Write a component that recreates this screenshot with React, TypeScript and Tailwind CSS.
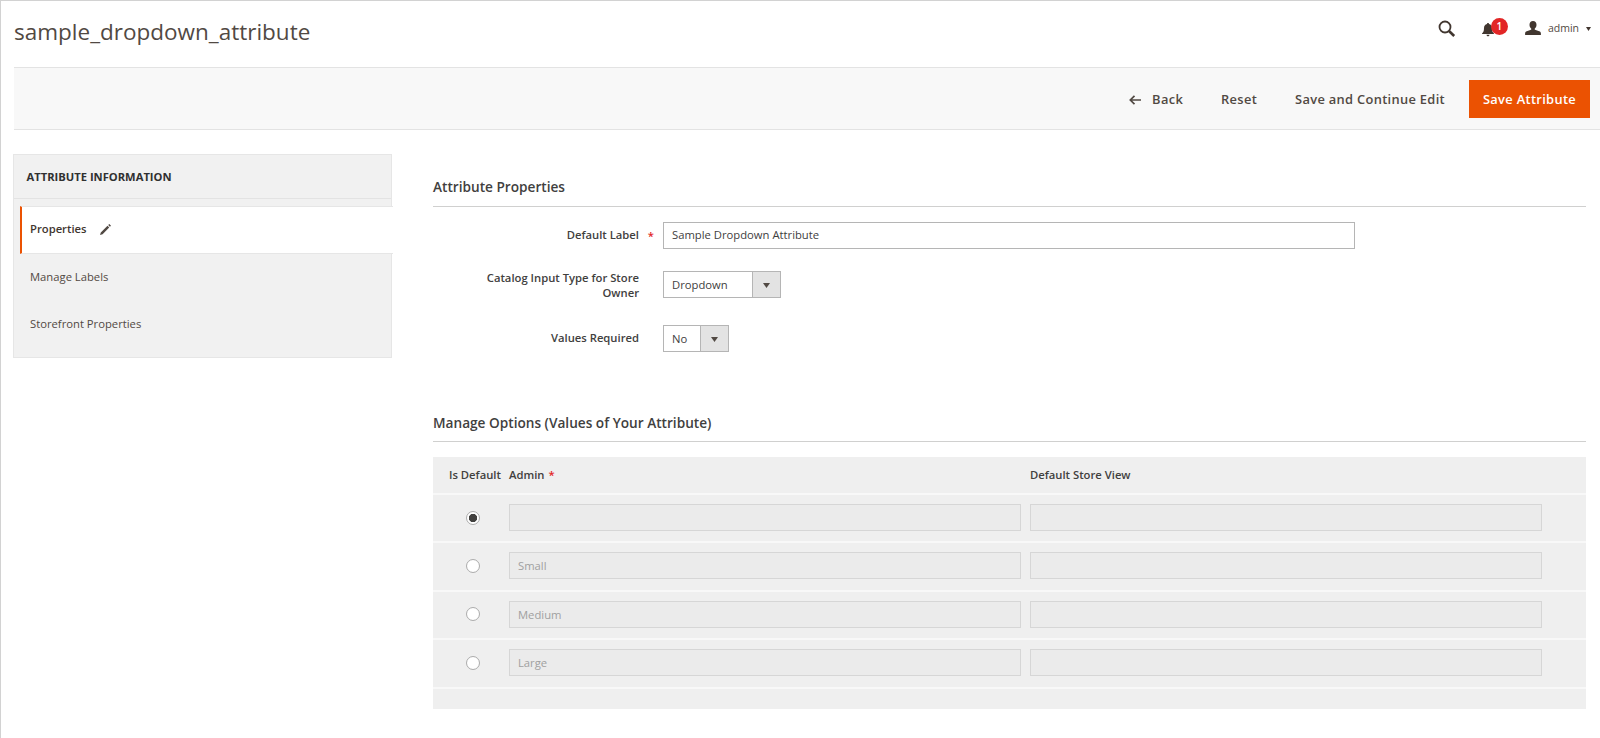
import { useState } from 'react';

const tabs = ['Properties', 'Manage Labels', 'Storefront Properties'];

const options = [
  { id: 1, admin: '', storeView: '' },
  { id: 2, admin: 'Small', storeView: '' },
  { id: 3, admin: 'Medium', storeView: '' },
  { id: 4, admin: 'Large', storeView: '' },
];

function SelectBox({ value, className }: { value: string; className: string }) {
  return (
    <button
      type="button"
      className={`flex h-[27px] border border-[#b5b5b5] bg-white text-left ${className}`}
    >
      <span className="flex-1 pl-2 leading-[25px]">{value}</span>
      <span className="flex h-full w-[28px] items-center justify-center border-l border-[#b5b5b5] bg-[#e3e3e3]">
        <svg width="7" height="5" viewBox="0 0 7 5" className="mt-[2px]">
          <path d="M0 0h7L3.5 5z" fill="#514943" />
        </svg>
      </span>
    </button>
  );
}

function Header() {
  return (
    <header className="flex h-[66px] justify-between pl-[13px]">
      <h1 className="pt-[14px] text-[22.5px] leading-[34px] text-[#514943]">
        sample_dropdown_attribute
      </h1>
      <div className="flex h-[54px] items-center pr-[9px] text-[#41362f]">
        <svg width="18" height="18" viewBox="0 0 18 18" className="mt-[1px]">
          <circle cx="7" cy="7" r="5.5" fill="none" stroke="currentColor" strokeWidth="1.8" />
          <path d="M11 11l5.2 5" stroke="currentColor" strokeWidth="2.6" />
        </svg>
        <div className="relative ml-[26px] h-[20px] w-[26px]">
          <svg width="12" height="14" viewBox="0 0 12 14" className="absolute top-[5px] left-0">
            <path
              d="M6 0c.7 0 1 .4 1 1 2 .5 3 2 3 4 0 3 .6 4.2 2 5.500V11H0v-.5C1.400 9.200 2 8 2 5c0-2 1-3.500 3-4 0-.6.3-1 1-1zM4.500 11.700h3c0 .9-.6 1.500-1.500 1.500s-1.500-.6-1.500-1.500z"
              fill="currentColor"
            />
          </svg>
          <span className="absolute top-0 left-[9px] flex h-[17px] w-[17px] items-center justify-center rounded-full bg-[#e22626] text-[10px] font-semibold text-white">
            1
          </span>
        </div>
        <svg width="16" height="14" viewBox="0 0 16 14" className="ml-[17px]">
          <path
            d="M8 0c2.200 0 3.500 1.500 3.500 3.700 0 1.600-.7 3-1.600 3.800-.3.300-.3 1 .1 1.200l4.200 1.500c1.100.4 1.700 1.100 1.700 2.200V14H.1v-1.600c0-1.100.6-1.800 1.700-2.200L6 8.700c.4-.2.4-.9.100-1.200-.9-.8-1.600-2.200-1.600-3.800C4.500 1.500 5.800 0 8 0z"
            fill="currentColor"
          />
        </svg>
        <span className="mt-[1px] ml-[7px] text-[10.5px] text-[#514943]">admin</span>
        <svg width="5" height="4" viewBox="0 0 5 4" className="mt-[2px] ml-[7px]">
          <path d="M0 0h5L2.500 4z" fill="currentColor" />
        </svg>
      </div>
    </header>
  );
}

function Toolbar() {
  return (
    <div className="ml-[13px] flex h-[63px] items-center justify-end border-y border-[#e3e3e3] bg-[#f8f8f8] pr-[10px] text-[12.86px] font-semibold tracking-[0.32px] text-[#514943]">
      <button type="button" className="flex items-center pt-[2px]">
        <svg width="12" height="10" viewBox="0 0 12 10" className="mr-[11px]">
          <path d="M5.500 .8L1.300 5l4.200 4.200M1.500 5H12" fill="none" stroke="currentColor" strokeWidth="1.700" />
        </svg>
        Back
      </button>
      <button type="button" className="ml-[38px] pt-[2px]">Reset</button>
      <button type="button" className="ml-[38px] pt-[2px]">Save and Continue Edit</button>
      <button type="button" className="ml-[24px] h-[38px] w-[121px] bg-[#eb5202] pt-[2px] text-white">
        Save Attribute
      </button>
    </div>
  );
}

function Sidebar({ active, onSelect }: { active: string; onSelect: (tab: string) => void }) {
  return (
    <nav className="mt-[24px] mr-[1px] ml-[12px] h-[204px] w-[379px] border border-[#e6e6e6] bg-[#f1f1f1]">
      <div className="h-[44px] border-b border-[#e3e3e3] pl-[12.5px] text-[11.200px] leading-[44px] font-bold text-[#303030] uppercase">
        Attribute Information
      </div>
      <ul className="pt-[7px] pl-[6px]">
        {tabs.map((tab) => (
          <li key={tab}>
            <button
              type="button"
              onClick={() => onSelect(tab)}
              className={
                tab === active
                  ? 'flex h-[48px] w-[373px] items-center border-y border-l-2 border-y-[#e6e6e6] border-l-[#eb5202] bg-white pb-[1px] pl-[8px] text-[11.25px] font-semibold text-[#41362f]'
                  : 'flex h-[47px] w-[373px] items-center pb-[1px] pl-[10px] text-[11.25px] text-[#514943]'
              }
            >
              {tab}
              {tab === active && (
                <svg width="11" height="11" viewBox="0 0 11 11" className="ml-[13px]">
                  <path d="M0 11l.8-2.600L7.500 1.800l1.700 1.700L2.600 10.200zM8.200 1.100L9.300 0 11 1.700 9.900 2.800z" fill="#514943" />
                </svg>
              )}
            </button>
          </li>
        ))}
      </ul>
    </nav>
  );
}

export default function App() {
  const [activeTab, setActiveTab] = useState('Properties');
  const [defaultOption, setDefaultOption] = useState(1);

  return (
    <div className="h-[738px] w-[1600px] overflow-hidden border-t border-l border-[#d2d2d2] bg-white font-['Open_Sans',sans-serif] text-[#41403e]">
      <Header />
      <Toolbar />
      <div className="flex">
        <Sidebar active={activeTab} onSelect={setActiveTab} />

        <main className="ml-[40px] w-[1153px]">
          <h2 className="mt-[46px] h-[31px] border-b border-[#d0d0cf] text-[13.65px] leading-[22px] font-semibold">
            Attribute Properties
          </h2>

          <div className="mt-[15px] grid grid-cols-[206px_692px] grid-rows-[27px_49px_54px] gap-x-[24px] text-[11.25px]">
            <label className="flex h-[27px] items-center justify-end pb-[1px] font-semibold">
              <span className="relative">
                Default Label
                <span className="absolute top-[1px] -right-[15px] text-[#e22626]">*</span>
              </span>
            </label>
            <input
              defaultValue="Sample Dropdown Attribute"
              className="h-[27px] border border-[#b5b5b5] px-2 pb-[2px] outline-none"
            />
            <label className="mt-[21px] pl-[40px] text-right leading-[15px] font-semibold">
              Catalog Input Type for Store Owner
            </label>
            <SelectBox value="Dropdown" className="mt-[22px] w-[118px]" />
            <label className="mt-[26px] text-right leading-[27px] font-semibold">
              Values Required
            </label>
            <SelectBox value="No" className="mt-[27px] w-[66px]" />
          </div>

          <h2 className="mt-[59px] h-[31px] border-b border-[#d0d0cf] text-[13.65px] leading-[24px] font-semibold">
            Manage Options (Values of Your Attribute)
          </h2>

          <div className="mt-[15px] h-[252px] bg-[#efefef] text-[11.25px]">
            <div className="grid h-[38px] grid-cols-[60px_512px_512px] items-center gap-x-[9px] border-b-2 border-[#f8f8f8] pt-[1px] pl-[7px] font-semibold">
              <span className="pl-[9px] whitespace-nowrap">Is Default</span>
              <span>
                Admin <span className="ml-[1px] text-[#e22626]">*</span>
              </span>
              <span>Default Store View</span>
            </div>
            {options.map((option) => (
              <div
                key={option.id}
                className="grid h-[48.4px] grid-cols-[60px_512px_512px] gap-x-[9px] border-b-2 border-[#f8f8f8] pt-[9px] pl-[7px]"
              >
                <div className="flex h-[27px] items-center pl-[26px]">
                  <input
                    type="radio"
                    name="default"
                    checked={defaultOption === option.id}
                    onChange={() => setDefaultOption(option.id)}
                    className="h-[14px] w-[14px] appearance-none rounded-full border border-[#adadad] bg-white bg-clip-padding checked:bg-[radial-gradient(circle,#41403e_3.800px,white_4.500px)]"
                  />
                </div>
                <input
                  disabled
                  defaultValue={option.admin}
                  className="h-[27px] border border-[#d6d6d6] bg-[#ebebeb] px-2 text-[#a0a0a0]"
                />
                <input
                  disabled
                  defaultValue={option.storeView}
                  className="h-[27px] border border-[#d6d6d6] bg-[#ebebeb] px-2 text-[#a0a0a0]"
                />
              </div>
            ))}
          </div>
        </main>
      </div>
    </div>
  );
}
